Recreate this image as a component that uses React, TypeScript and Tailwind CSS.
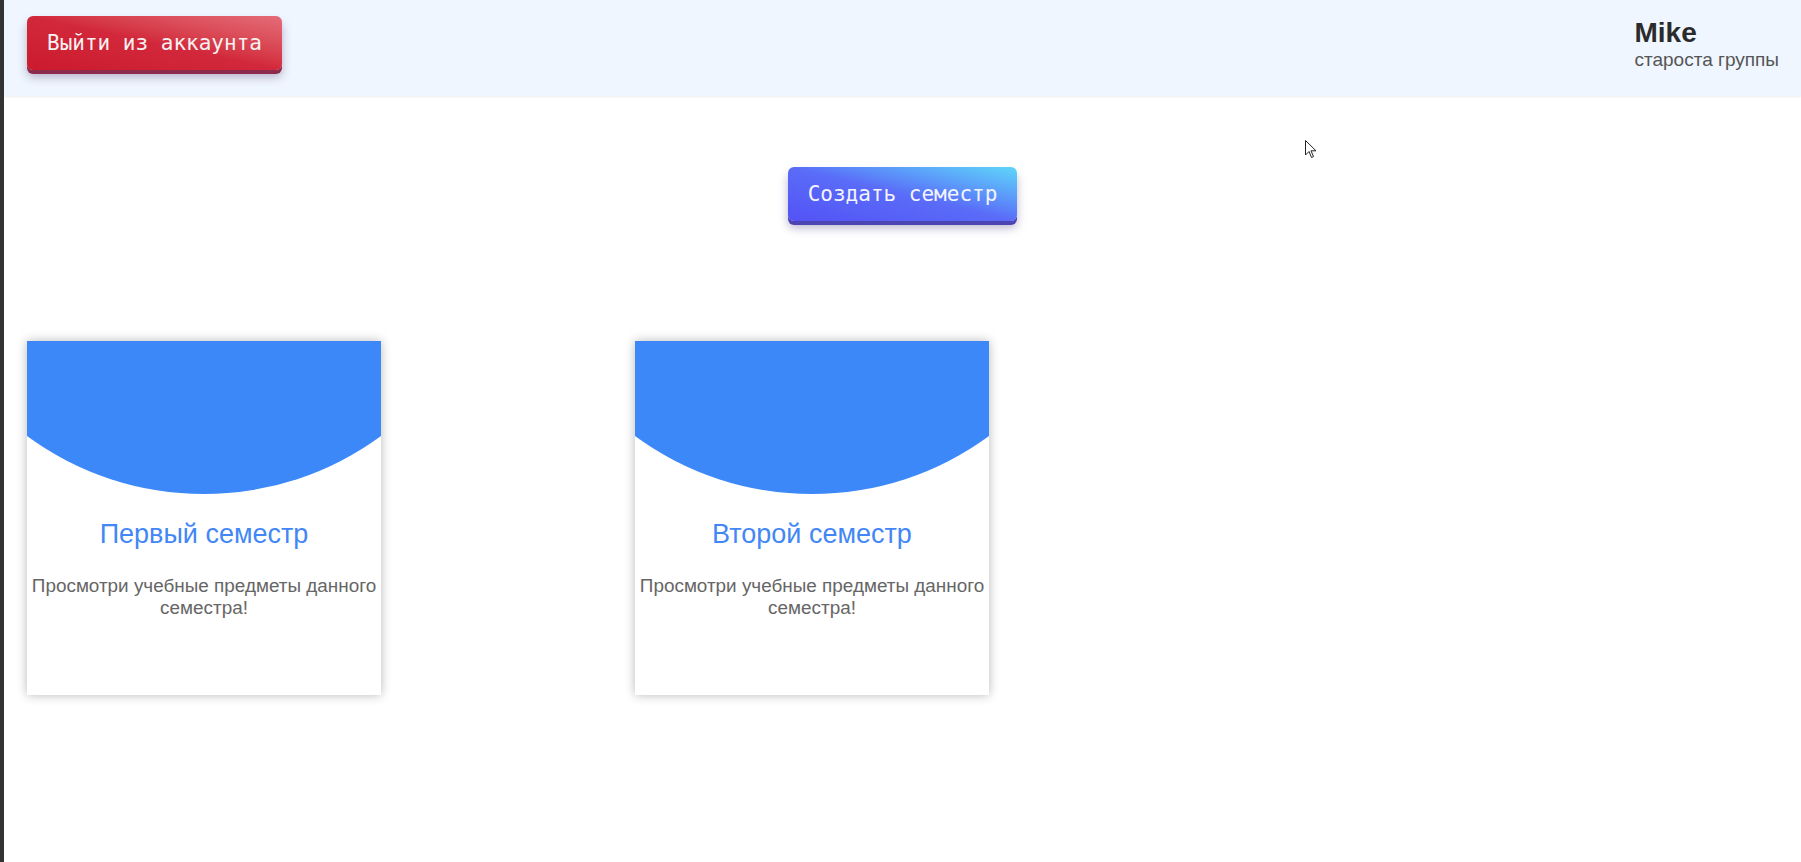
import React from "react";

function Card({ title }: { title: string }) {
  return (
    <div className="relative w-[354px] h-[354px] bg-white shadow-[0_0_10px_rgba(0,0,0,0.28)] shrink-0 flex flex-col items-center">
      <svg width="354" height="160" viewBox="0 0 354 160" className="block">
        <path d="M0 0 H354 V95 A299 299 0 0 1 0 95 Z" fill="#3d88f8" />
      </svg>
      <div className="mt-[18px] text-[27px] leading-[31px] text-[#4287f5] font-['Liberation_Sans',Arial,sans-serif]">
        {title}
      </div>
      <div className="mt-[25px] px-0 text-center text-[18.9px] leading-[21.5px] text-[#666] font-['Liberation_Sans',Arial,sans-serif] whitespace-nowrap">
        Просмотри учебные предметы данного
        <br />
        семестра!
      </div>
    </div>
  );
}

export default function App() {
  return (
    <div className="flex w-full min-h-[862px] bg-white">
      <div className="w-[4px] shrink-0 bg-[#333]" />
      <div className="relative flex-1 flex flex-col">
        <header className="h-[96px] bg-[#eff6ff] flex justify-between items-start px-[23px] shadow-[0_1px_2px_rgba(0,0,0,0.07)] font-['Liberation_Sans',Arial,sans-serif]">
          <button className="mt-[16px] h-[54px] pt-[2px] px-[20px] rounded-[6px] bg-linear-to-tr from-[#cb1a2d] via-[#d2283b] to-[#e46c79] text-[#f7f1f2] text-[21px] font-['DejaVu_Sans_Mono',monospace] shadow-[0_4px_0_#8c2b4b,0_7px_10px_rgba(80,40,90,0.35)] flex items-center">
            Выйти из аккаунта
          </button>
          <div className="mt-[17px] mr-[-1px] flex flex-col">
            <div className="text-[28px] leading-[31px] font-bold text-[#2b2b2b]">Mike</div>
            <div className="text-[19px] leading-[23px] text-[#555]">староста группы</div>
          </div>
        </header>
        <div className="flex justify-center pt-[71px]">
          <button className="h-[54px] pt-[2px] px-[20px] rounded-[6px] bg-linear-to-tr from-[#5352f5] via-[#5a6cf8] to-[#5fd6f8] text-[#f4f4ff] text-[21px] font-['DejaVu_Sans_Mono',monospace] shadow-[0_4px_0_#4d44b3,0_7px_10px_rgba(60,50,120,0.35)] flex items-center">
            Создать семестр
          </button>
        </div>
        <div className="mt-[120px] flex gap-[254px] pl-[23px]">
          <Card title="Первый семестр" />
          <Card title="Второй семестр" />
        </div>
        <svg
          className="absolute left-[1301px] top-[140px]"
          width="12"
          height="19"
          viewBox="0 0 12 19"
        >
          <path
            d="M0.5 0.5 L0.5 15 L4 11.5 L6.5 17.5 L8.5 16.6 L6 10.8 L11 10.8 Z"
            fill="#fff"
            stroke="#222"
            strokeWidth="1"
            strokeLinejoin="round"
          />
        </svg>
      </div>
    </div>
  );
}
